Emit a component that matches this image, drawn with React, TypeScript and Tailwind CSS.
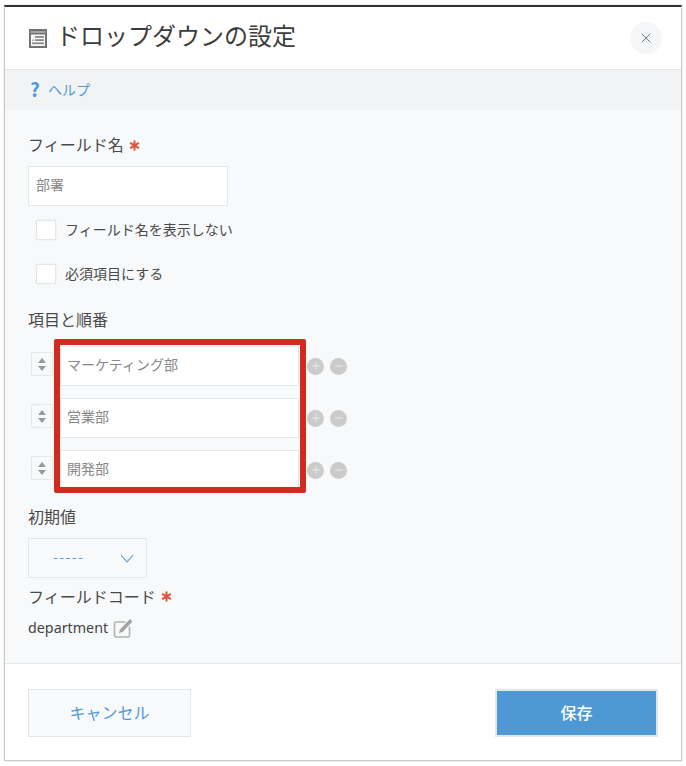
import { Plus, Minus, X } from 'lucide-react';

const font = { fontFamily: '"Noto Sans CJK JP", "Liberation Sans", sans-serif' };

const items = ['マーケティング部', '営業部', '開発部'];

function Required() {
  return (
    <svg viewBox="0 0 12 12" className="ml-[5px] mt-[2px] h-[11px] w-[11px]">
      <path d="M6 0.5V11.5M1.2 3.2L10.8 8.8M10.8 3.2L1.2 8.8" stroke="#e0533d" strokeWidth="2.2" />
    </svg>
  );
}

function FormIcon() {
  return (
    <svg viewBox="0 0 18 19" className="h-[19px] w-[18px]">
      <rect width="18" height="19" fill="#727272" />
      <rect x="1.5" y="2" width="15" height="2" fill="#a3a3a3" />
      <rect x="2" y="5.5" width="14" height="11.5" fill="#fafafa" />
      <rect x="6" y="7" width="9" height="1.8" fill="#8a8a8a" />
      <rect x="6" y="10.2" width="9" height="1.8" fill="#8a8a8a" />
      <rect x="3" y="13.4" width="12" height="1.8" fill="#8a8a8a" />
      <rect x="3" y="10.6" width="2" height="1.2" fill="#9a9a9a" />
    </svg>
  );
}

function EditIcon() {
  return (
    <svg viewBox="0 0 20 20" className="ml-[5px] h-[20px] w-[20px]">
      <path d="M12.5 4H3A1.5 1.5 0 0 0 1.5 5.5V17.5A1.5 1.5 0 0 0 3 19H15A1.5 1.5 0 0 0 16.5 17.5V8.5" fill="none" stroke="#b3b3b3" strokeWidth="1.6" />
      <path d="M7 11.5L17 1L19.5 3.5L9.5 14L6 15Z" fill="#a3a3a3" />
    </svg>
  );
}

function Checkbox({ label, className }: { label: string; className: string }) {
  return (
    <label className={`ml-2 flex h-[19px] items-center ${className}`}>
      <span className="h-[20px] w-[20px] rounded-[2px] border border-[#e3e7e8] bg-white shadow-[0_0_1px_#ccc]" />
      <span className="ml-[9px] text-[14px] text-[#4a4a4a]">{label}</span>
    </label>
  );
}

function ItemRow({ value, last }: { value: string; last: boolean }) {
  return (
    <div className={`flex h-[40px] items-center ${last ? '' : 'mb-[12px]'}`}>
      <div className="ml-[3px] mt-[6px] flex h-[24px] w-[22px] flex-col items-center justify-center gap-[3px] self-start rounded-[2px] border border-[#e3e7e8] bg-[#f7f9fa]">
        <span className="h-0 w-0 border-x-[4px] border-b-[5px] border-x-transparent border-b-[#9a9a9a]" />
        <span className="h-0 w-0 border-x-[4px] border-t-[5px] border-x-transparent border-t-[#9a9a9a]" />
      </div>
      <div className="ml-[7px] flex h-[40px] w-[239px] items-center border border-[#e3e7e8] bg-white pb-[3px] pl-[6px] text-[14px] text-[#888888]">
        {value}
      </div>
      <div className="ml-[8px] flex h-[17px] w-[17px] items-center justify-center rounded-full bg-[#cbcbcb]">
        <Plus className="h-[12px] w-[12px] text-[#eeeeee]" strokeWidth={1.75} />
      </div>
      <div className="ml-[6px] flex h-[17px] w-[17px] items-center justify-center rounded-full bg-[#cbcbcb]">
        <Minus className="h-[12px] w-[12px] text-[#eeeeee]" strokeWidth={1.75} />
      </div>
    </div>
  );
}

export default function App() {
  return (
    <div className="h-[766px] w-[686px] bg-white pl-[4px] pt-[5px]" style={font}>
      <div className="relative flex h-[756px] w-[678px] flex-col border-x border-b border-t-2 border-x-[#c9c9c9] border-b-[#c9c9c9] border-t-[#333333] bg-white shadow-[0_0_2px_rgba(0,0,0,0.15)]">
        {/* Header */}
        <div className="flex h-[63px] shrink-0 items-center border-b border-[#e3e7e8] pl-[24px] pr-[19px]">
          <FormIcon />
          <h1 className="ml-[9px] pb-[6px] text-[24px] font-normal text-[#3d3d3d]">ドロップダウンの設定</h1>
          <button className="ml-auto flex h-[32px] w-[32px] items-center justify-center rounded-full bg-[#f5f6f8]">
            <X className="h-[16px] w-[16px] text-[#777777]" strokeWidth={1.5} />
          </button>
        </div>

        {/* Help */}
        <div className="flex h-[40px] shrink-0 items-center bg-[#f2f3f5] pb-[2px] pl-[25px]">
          <span className="w-[18px] text-[19px] font-bold text-[#4f9ad9]">?</span>
          <a className="text-[14px] text-[#4f9ad9]">ヘルプ</a>
        </div>

        {/* Body */}
        <div className="flex-1 border-b border-[#e3e7e8] bg-[#f7f9fa] pl-[23px] pt-[24px]">
          <div className="flex h-[22px] items-center pb-[2px] text-[16px] text-[#4a4a4a]">
            フィールド名
            <Required />
          </div>
          <div className="mt-[10px] flex h-[40px] w-[200px] items-center border border-[#e3e7e8] bg-white pb-[3px] pl-[7px] text-[14px] text-[#888888]">
            部署
          </div>
          <Checkbox label="フィールド名を表示しない" className="mt-[14px]" />
          <Checkbox label="必須項目にする" className="mt-[25px]" />

          <div className="mt-[26px] flex h-[22px] items-center pb-[2px] text-[16px] text-[#4a4a4a]">項目と順番</div>
          <div className="mt-[15px]">
            {items.map((item, i) => (
              <ItemRow key={item} value={item} last={i === items.length - 1} />
            ))}
          </div>

          <div className="mt-[16px] flex h-[22px] items-center pb-[2px] text-[16px] text-[#4a4a4a]">初期値</div>
          <div className="relative mt-[10px] flex h-[40px] w-[119px] items-center border border-[#e3e7e8] bg-[#f7f9fa] pb-[3px] pl-[24px] text-[14px] tracking-[1.4px] text-[#4f9ad9]">
            -----
            <svg viewBox="0 0 14 9" className="absolute right-[12px] top-[15px] h-[9px] w-[14px]">
              <path d="M1 1L7 8L13 1" fill="none" stroke="#4f9ad9" strokeWidth="1.1" />
            </svg>
          </div>
          <div className="mt-[8px] flex h-[22px] items-center pb-[3px] text-[16px] text-[#4a4a4a]">
            フィールドコード
            <Required />
          </div>
          <div className="mt-[9px] flex h-[22px] items-center text-[14.3px] text-[#444444]" style={{ fontFamily: '"Noto Sans", sans-serif' }}>
            department
            <EditIcon />
          </div>
        </div>

        {/* Footer */}
        <div className="flex h-[96px] shrink-0 items-center justify-between pl-[23px] pr-[23px] pt-[2px]">
          <button className="h-[48px] w-[163px] border border-[#e3e7e8] bg-[#f7f9fa] pb-[2px] text-[16px] text-[#4f9ad9]">キャンセル</button>
          <button className="h-[48px] w-[163px] border-2 border-[#e3e7e8] bg-[#4f98d6] pb-[2px] text-[16px] font-medium text-white">保存</button>
        </div>

        {/* Red annotation around the item inputs */}
        <div className="absolute left-[49px] top-[332px] h-[154px] w-[252px] rounded-[2px] border-[6px] border-[#d12b1f]" />
      </div>
    </div>
  );
}
